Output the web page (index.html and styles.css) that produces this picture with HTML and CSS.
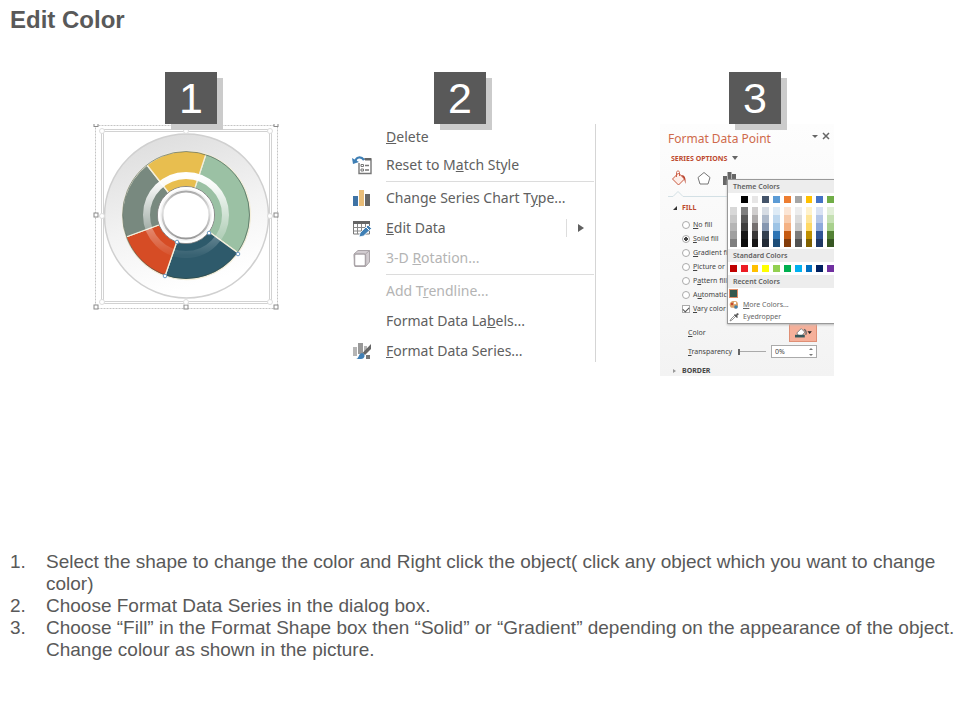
FILE: index.html
```html
<!DOCTYPE html>
<html lang="en">
<head>
    <meta charset="UTF-8">
    <meta name="viewport" content="width=device-width, initial-scale=1.0">
    <title>Edit Color</title>
    <link rel="stylesheet" href="styles.css">
</head>
<body>

    <h1>Edit Color</h1>

    <main class="steps">
        <section class="step step-chart">
            <div class="badge">1</div>
            <svg class="chart" viewBox="1 0 190 190" role="img" aria-label="Selected doughnut chart">
                <defs>
                    <linearGradient id="plate" x1="0" y1="0" x2="0.3" y2="1">
                        <stop offset="0" stop-color="#dadada"/>
                        <stop offset="0.6" stop-color="#f3f3f3"/>
                        <stop offset="1" stop-color="#ffffff"/>
                    </linearGradient>
                    <linearGradient id="shine" x1="0" y1="52" x2="0" y2="131" gradientUnits="userSpaceOnUse">
                        <stop offset="0" stop-color="#fff"/>
                        <stop offset="0.15" stop-color="#fff" stop-opacity="0.9"/>
                        <stop offset="0.7" stop-color="#fff" stop-opacity="0.3"/>
                        <stop offset="1" stop-color="#fff" stop-opacity="0.05"/>
                    </linearGradient>
                    <linearGradient id="hub" x1="0" y1="0" x2="0" y2="1">
                        <stop offset="0" stop-color="#aaa"/>
                        <stop offset="0.4" stop-color="#e2e2e2"/>
                        <stop offset="1" stop-color="#999"/>
                    </linearGradient>
                </defs>
                <rect x="3.5" y="1.5" width="182" height="183" fill="none" stroke="#c4c4c4" stroke-dasharray="2 1"/>
                <rect x="10.5" y="6.5" width="168" height="172" fill="none" stroke="#d2d2d2" stroke-width="3"/>
                <rect x="10.5" y="6.5" width="168" height="172" fill="none" stroke="#fff"/>
                <circle cx="94.500" cy="92" r="82" fill="url(#plate)" stroke="#d0d0d0" stroke-width="1.5"/>
                <!-- slices, clockwise from the top right -->
                <g stroke="#f4efdc" stroke-width="1.3">
                    <path d="M94 91 L114 30 A64 64 0 0 1 146 129 Z" fill="#9bc1a4"/>
                    <path d="M94 91 L146 129 A64 64 0 0 1 73 152 Z" fill="#2e5a6b"/>
                    <path d="M94 91 L73 152 A64 64 0 0 1 34 113 Z" fill="#d64c25"/>
                    <path d="M94 91 L34 113 A64 64 0 0 1 55 41 Z" fill="#78897f"/>
                    <path d="M94 91 L55 41 A64 64 0 0 1 114 30 Z" fill="#e8be4f"/>
                </g>
                <circle cx="94" cy="91" r="63.5" fill="none" stroke="#33483f" stroke-opacity="0.55"/>
                <circle cx="94" cy="91" r="39.5" fill="none" stroke="url(#shine)" stroke-width="7"/>
                <circle cx="94" cy="91" r="28.5" fill="#f4f4f4" stroke="#888"/>
                <circle cx="94" cy="91" r="27" fill="#f4f4f4" stroke="#fff" stroke-width="2"/>
                <circle cx="94" cy="91" r="23.5" fill="#fff" stroke="url(#hub)" stroke-width="2"/>
                <g fill="#fff" stroke="#8a8a8a">
                    <rect x="2" y="-1.5" width="4" height="4"/>
                    <rect x="92" y="-1.5" width="4" height="4"/>
                    <rect x="182" y="-1.5" width="4" height="4"/>
                    <rect x="2" y="89" width="4" height="4"/>
                    <rect x="182" y="89" width="4" height="4"/>
                    <rect x="2" y="181" width="4" height="4"/>
                    <rect x="92" y="181" width="4" height="4"/>
                    <rect x="182" y="181" width="4" height="4"/>
                </g>
                <g fill="#fff" stroke="#ddd">
                    <circle cx="10" cy="7" r="2.5"/>
                    <circle cx="94" cy="7" r="2.5"/>
                    <circle cx="178" cy="7" r="2.5"/>
                    <circle cx="10" cy="92" r="2.5"/>
                    <circle cx="178" cy="92" r="2.5"/>
                    <circle cx="10" cy="178" r="2.5"/>
                    <circle cx="94" cy="178" r="2.5"/>
                    <circle cx="178" cy="178" r="2.5"/>
                </g>
                <g fill="#fff" stroke="#6f9cc4">
                    <circle cx="117" cy="109" r="1.8"/>
                    <circle cx="146" cy="130" r="1.8"/>
                    <circle cx="85" cy="118" r="1.8"/>
                    <circle cx="73" cy="152" r="1.8"/>
                </g>
            </svg>
        </section>

        <section class="step step-menu">
            <div class="badge">2</div>
            <div class="menu">
                <button class="menu-item"><span class="icon"></span><span><u>D</u>elete</span></button>
                <button class="menu-item">
                    <svg class="icon" viewBox="0 0 20 20">
                        <path d="M7 8V18.500H19V4H12" fill="#fff" stroke="#777" stroke-width="1.400"/>
                        <path d="M13 3h6v2.500h-6z" fill="#666"/>
                        <path d="M9 9.500h2.500v2H9zM9 14h2.500v2H9z" fill="none" stroke="#777"/>
                        <path d="M13 10.500h4M13 15h4" stroke="#777" stroke-width="1.300"/>
                        <path d="M12 5C9 1 4 2 3.500 6" fill="none" stroke="#3f7fb5" stroke-width="2.200"/>
                        <path d="M0 3l1 6 6-2z" fill="#3f7fb5"/>
                    </svg>
                    <span>Reset to M<u>a</u>tch Style</span>
                </button>
                <hr>
                <button class="menu-item">
                    <svg class="icon" viewBox="0 0 20 20">
                        <path d="M1 8h5v10H1z" fill="#3f73a5"/>
                        <path d="M7 2h5v16H7z" fill="#e9bd78"/>
                        <path d="M13 6h5v12h-5z" fill="#666"/>
                    </svg>
                    <span>Change Series Chart T<u>y</u>pe...</span>
                </button>
                <button class="menu-item">
                    <svg class="icon" viewBox="0 0 20 20">
                        <path d="M1.500 4h16v12h-16z" fill="#fff" stroke="#777"/>
                        <path d="M1 3h17v3H1z" fill="#666"/>
                        <path d="M1.500 9.500h16M1.500 13h16M5.500 6v10M9.500 6v10M13.500 6v10" stroke="#888"/>
                        <path d="M7 19l1-4 8-8 3.500 3.500-8 7.500z" fill="#3f7fb5" stroke="#fff" stroke-width="0.800"/>
                        <path d="M14 9l3 3" stroke="#fff"/>
                    </svg>
                    <span><u>E</u>dit Data</span>
                    <span class="submenu"></span>
                </button>
                <button class="menu-item" disabled>
                    <svg class="icon" viewBox="0 0 20 20">
                        <path d="M2 6l4-3.500h11.500V14l-4 4.500H3z" fill="#d2ccd0" stroke="#aaa4a8"/>
                        <rect x="2.500" y="6" width="11" height="12" rx="1.500" fill="#fff" stroke="#aaa4a8" stroke-width="1.500"/>
                        <path d="M13.500 6l4-3.500" stroke="#aaa4a8"/>
                    </svg>
                    <span>3-D <u>R</u>otation...</span>
                </button>
                <hr>
                <button class="menu-item" disabled><span class="icon"></span><span>Add T<u>r</u>endline...</span></button>
                <button class="menu-item"><span class="icon"></span><span>Format Data La<u>b</u>els...</span></button>
                <button class="menu-item">
                    <svg class="icon" viewBox="0 0 20 20">
                        <path d="M1 6h4v9H1z" fill="#b5b5b5"/>
                        <path d="M6 2h5v11H6z" fill="#999"/>
                        <path d="M12 5h3v6h-3z" fill="#b5b5b5"/>
                        <path d="M19 3v5l-6 6-2.500-2z" fill="#666"/>
                        <path d="M4 18c3 0 2-5 6-6 4 1 3 6-1 6z" fill="#3f7fb5"/>
                        <path d="M14 14h4v4h-4z" fill="#777"/>
                    </svg>
                    <span><u>F</u>ormat Data Series...</span>
                </button>
            </div>
        </section>

        <section class="step step-pane">
            <div class="badge">3</div>
            <div class="pane">
                <div class="pane-head">
                    <h2>Format Data Point</h2>
                    <svg class="pane-tools" viewBox="0 0 20 10">
                        <path d="M1 4h6L4 7z" fill="#666"/>
                        <path d="M12 2l6 6M18 2l-6 6" stroke="#666" stroke-width="1.500"/>
                    </svg>
                </div>
                <button class="series">SERIES OPTIONS <span class="arrow"></span></button>
                <svg class="tabs" viewBox="0 0 174 30">
                    <path d="M12.500 11l6-6 6 6-6 6z" fill="#fdeee9" stroke="#c9583e"/>
                    <path d="M16.500 9V4.500c0-2 3-2 3 0V8" fill="none" stroke="#c9583e" stroke-width="0.900"/>
                    <path d="M21 7c4 0 5 3 4.500 9-1-3-1-5-2-6z" fill="#b9432e"/>
                    <path d="M44 4.500l6 5-2 6.500h-8l-2-6.500z" fill="#fff" stroke="#777"/>
                    <path d="M63 8h4v9h-4zM67.500 4h4v13h-4zM72 6h4v11h-4z" fill="#666"/>
                    <path d="M8 28.500h5l5-5 5 5h150" fill="none" stroke="#d3e0e5"/>
                </svg>
                <h3 class="group open">FILL</h3>
                <div class="options">
                    <label><input type="radio" name="fill"><span><u>N</u>o fill</span></label>
                    <label><input type="radio" name="fill" checked><span><u>S</u>olid fill</span></label>
                    <label><input type="radio" name="fill"><span><u>G</u>radient fill</span></label>
                    <label><input type="radio" name="fill"><span><u>P</u>icture or</span></label>
                    <label><input type="radio" name="fill"><span>P<u>a</u>ttern fill</span></label>
                    <label><input type="radio" name="fill"><span>A<u>u</u>tomatic</span></label>
                    <label><input type="checkbox" checked><span><u>V</u>ary color</span></label>
                </div>
                <div class="field">
                    <span><u>C</u>olor</span>
                    <button class="color-button" aria-label="Color">
                        <svg viewBox="0 0 28 18">
                            <path d="M7 9l5-5 4 4-3 4H9z" fill="#fff" stroke="#777"/>
                            <path d="M15 5c3 1 3 4 2 6" fill="none" stroke="#666" stroke-width="1.500"/>
                            <path d="M5 11h11v3H5z" fill="#35585c"/>
                            <path d="M19 7h5l-2.500 3z" fill="#222"/>
                        </svg>
                    </button>
                </div>
                <div class="field">
                    <label for="transparency"><u>T</u>ransparency</label>
                    <input type="range" value="0" aria-label="Transparency slider">
                    <span class="spin">
                        <input type="text" id="transparency" value="0%">
                        <svg viewBox="0 0 6 12"><path d="M1 4l2-2 2 2zM1 8l2 2 2-2z" fill="#777"/></svg>
                    </span>
                </div>
                <h3 class="group closed">BORDER</h3>

                <!-- open colour menu, covers the right of the pane -->
                <div class="palette">
                    <h4>Theme Colors</h4>
                    <div class="swatches theme" id="theme"></div>
                    <div class="swatches shades" id="shades"></div>
                    <h4>Standard Colors</h4>
                    <div class="swatches" id="standard"></div>
                    <h4>Recent Colors</h4>
                    <div class="recent"></div>
                    <button class="palette-item">
                        <svg viewBox="0 0 10 10">
                            <path d="M5 1C2 1 0 3 1 6s3 1 4 2 4 1 4-3-2-4-4-4z" fill="#d9a26a"/>
                            <circle cx="3" cy="4" r="1.200" fill="#c8452d"/>
                            <circle cx="6" cy="3" r="1.200" fill="#fff"/>
                            <circle cx="7" cy="7" r="1.800" fill="#407fa8"/>
                        </svg>
                        <span><u>M</u>ore Colors...</span>
                    </button>
                    <button class="palette-item">
                        <svg viewBox="0 0 10 10">
                            <path d="M1 9l1-2 4-4 1 1-4 4z" fill="#fff" stroke="#777" stroke-width="0.800"/>
                            <path d="M5 3l1-1 1 1 1-2 2 1-2 2 1 1-1 1z" fill="#555"/>
                        </svg>
                        <span>Eyedropper</span>
                    </button>
                </div>
            </div>
        </section>
    </main>

    <ol class="notes">
        <li>Select the shape to change the color and Right click the object( click any object which you want to change color)</li>
        <li>Choose Format Data Series in the dialog box.</li>
        <li>Choose “Fill” in the Format Shape box then “Solid” or “Gradient” depending on the appearance of the object. Change colour as shown in the picture.</li>
    </ol>

    <script src="script.js"></script>
</body>
</html>
```
FILE: styles.css
```css
* {
    box-sizing: border-box;
}

body {
    font-family: "Liberation Sans", Arial, sans-serif;
    margin: 0;
    color: #595959;
    background-color: #fff;
}

h1 {
    margin: 0;
    padding: 6px 10px 0;
    font-size: 24px;
    line-height: 28px;
}

button {
    font-family: inherit;
    color: inherit;
    background: none;
    border: none;
    padding: 0;
    text-align: left;
}

u {
    text-underline-offset: 1px;
}

.steps {
    display: flex;
    gap: 35px;
    padding: 38px 81px 0 93px;
    min-height: 517px;
    align-items: flex-start;
}

.step {
    display: flex;
    flex-direction: column;
}

.step-chart {
    flex: 196 1 0;
}

.step-menu {
    flex: 272 1 0;
}

.step-pane {
    flex: 248 1 0;
}

.badge {
    position: relative;
    z-index: 1;
    align-self: center;
    width: 52px;
    height: 52px;
    background-color: #595959;
    box-shadow: 6px 6px 0 #cbcbcb;
    color: #fff;
    font-size: 43px;
    line-height: 53px;
    text-align: center;
}

.chart {
    width: 190px;
    height: 190px;
}

/* context menu */
.menu {
    margin-left: 28px;
    padding-right: 1px;
    border-right: 1px solid #d5d5d5;
    font-family: "Noto Sans", sans-serif;
    height: 238px;
}

.menu-item {
    display: flex;
    align-items: center;
    width: 100%;
    height: 30px;
    font-size: 14px;
    line-height: 20px;
    color: #606060;
    white-space: nowrap;
}

.menu-item:first-child {
    height: 26px;
}

.menu-item:disabled {
    color: #b4b4b4;
}

.menu .icon {
    flex: none;
    width: 20px;
    height: 20px;
    margin-right: 14px;
}

.menu hr {
    height: 1px;
    margin: 1px 0 1px 34px;
    border: none;
    background-color: #dcdcdc;
}

.submenu {
    margin-left: auto;
    margin-right: 10px;
    padding-left: 11px;
    border-left: 1px solid #ddd;
    height: 18px;
    display: flex;
    align-items: center;
}

.submenu::after {
    content: "";
    border: 4px solid transparent;
    border-left: 6px solid #606060;
    border-right: none;
}

/* format pane */
.pane {
    position: relative;
    align-self: flex-start;
    width: 174px;
    height: 252px;
    margin-left: 29px;
    padding-top: 6px;
    overflow: hidden;
    background: linear-gradient(#fdfdfd, #f3f3f3);
    font-family: "Noto Sans", sans-serif;
    font-size: 7px;
    line-height: 10px;
    color: #444;
}

.pane-head {
    display: flex;
    justify-content: space-between;
    padding: 0 3px 0 8px;
}

.pane h2 {
    margin: 0;
    font-size: 12px;
    font-weight: normal;
    line-height: 18px;
    color: #cf6a4b;
}

.pane-tools {
    width: 20px;
    height: 10px;
    margin-top: 1px;
}

.series {
    display: flex;
    align-items: center;
    gap: 5px;
    height: 20px;
    padding-left: 11px;
    font-size: 7px;
    font-weight: bold;
    color: #bd4b30;
}

.arrow {
    border: 3px solid transparent;
    border-top: 4px solid #666;
    border-bottom: none;
}

.tabs {
    display: block;
    width: 174px;
    height: 30px;
}

.group {
    margin: 0;
    padding-left: 22px;
    font-size: 7px;
    line-height: 20px;
    position: relative;
}

.group.open {
    color: #bd4b30;
}

.group::before {
    content: "";
    position: absolute;
    left: 13px;
    top: 8px;
    border: 2px solid transparent;
}

.group.open::before {
    border-right-color: #333;
    border-bottom-color: #333;
}

.group.closed::before {
    border-left: 3px solid #999;
}

.options {
    width: 67px;
    margin-bottom: 7px;
    overflow: hidden;
}

.options label {
    display: flex;
    align-items: center;
    gap: 3px;
    height: 14px;
    padding-left: 22px;
    white-space: nowrap;
}

.options input {
    appearance: none;
    flex: none;
    width: 8px;
    height: 8px;
    margin: 0;
    border: 1px solid #aaa;
    background-color: #fff;
    border-radius: 50%;
}

.options input[type="radio"]:checked {
    background: radial-gradient(#444 0 2px, #fff 2px);
}

.options input[type="checkbox"] {
    display: grid;
    place-items: center;
    border-radius: 0;
}

.options input[type="checkbox"]::before {
    content: "";
    width: 5px;
    height: 3px;
    border-left: 1px solid #555;
    border-bottom: 1px solid #555;
    transform: rotate(-45deg);
}

.field {
    display: flex;
    align-items: center;
    height: 19px;
    padding: 0 17px 0 28px;
}

.color-button {
    width: 28px;
    height: 18px;
    margin-left: auto;
    background-color: #f5b09a;
    border: 1px solid #df8f75;
}

.color-button svg {
    display: block;
    width: 100%;
    height: 100%;
}

.field input[type="range"] {
    appearance: none;
    width: 28px;
    height: 8px;
    margin: 0 4px 0 6px;
    background: linear-gradient(#aaa, #aaa) center / 100% 1px no-repeat;
}

.field input[type="range"]::-webkit-slider-thumb {
    appearance: none;
    width: 2px;
    height: 6px;
    background-color: #666;
}

.spin {
    display: flex;
    align-items: center;
    width: 46px;
    height: 13px;
    margin-left: auto;
    border: 1px solid #aaa;
    background-color: #fff;
}

.spin input {
    width: 36px;
    padding: 0 3px;
    border: none;
    background: none;
    font: inherit;
    color: inherit;
}

.spin svg {
    width: 6px;
    height: 12px;
}

/* colour menu */
.palette {
    position: absolute;
    left: 67px;
    top: 55px;
    width: 110px;
    height: 145px;
    background-color: #fff;
    border: 1px solid #999;
    box-shadow: 0 1px 2px #bbb;
}

.palette h4 {
    margin: 0;
    padding-left: 5px;
    font-size: 7px;
    line-height: 13px;
    font-weight: 600;
    color: #606060;
    background-color: #ededed;
}

.swatches {
    display: flex;
    gap: 4px;
    padding: 3px 2px;
}

.swatch {
    width: 7px;
    height: 7px;
}

.swatches.shades {
    padding: 1px 2px 2px;
}

.shades .swatch {
    height: 40px;
}

.recent {
    width: 9px;
    height: 9px;
    margin: 1px;
    background-color: #35584e;
    border: 1px solid #e08c68;
}

.palette-item {
    display: flex;
    align-items: center;
    gap: 4px;
    height: 12px;
    padding-left: 1px;
    font-size: 7px;
    line-height: 12px;
    color: #666;
}

.palette-item svg {
    width: 10px;
    height: 10px;
}

/* instructions */
.notes {
    margin: 0;
    padding: 0 4px 0 10px;
    list-style: none;
    counter-reset: note;
    font-size: 19px;
    line-height: 22px;
}

.notes li {
    display: grid;
    grid-template-columns: 36px 1fr;
    counter-increment: note;
}

.notes li::before {
    content: counter(note) ".";
}
```
FILE: script.js
```js
const theme = ['#ffffff', '#000000', '#e7e6e6', '#44546a', '#5b9bd5', '#ed7d31', '#a5a5a5', '#ffc000', '#4472c4', '#70ad47'];
const standard = ['#c00000', '#ed1c24', '#ffc000', '#ffff00', '#92d050', '#00b050', '#00b0f0', '#0070c0', '#002060', '#7030a0'];

// five steps for each theme colour, light to dark
const shades = [
    ['#d8d8d8', '#c8c8c8', '#b5b5b5', '#a0a0a0', '#7f7f7f'],
    ['#7f7f7f', '#595959', '#3f3f3f', '#161616', '#0c0c0c'],
    ['#d0cece', '#aeabab', '#757070', '#3a3838', '#171616'],
    ['#d6dce4', '#adb9ca', '#8496b0', '#323f4f', '#222a35'],
    ['#deebf6', '#bdd7ee', '#9cc3e5', '#2e75b5', '#1e4e79'],
    ['#fbe5d5', '#f7cbac', '#f4b183', '#c55a11', '#833c0b'],
    ['#ededed', '#dbdbdb', '#c9c9c9', '#7b7b7b', '#525252'],
    ['#fff2cc', '#fee599', '#ffd965', '#bf9000', '#7f6000'],
    ['#d9e2f3', '#b4c6e7', '#8eaadb', '#2f5496', '#1f3864'],
    ['#e2efd9', '#c5e0b3', '#a8d08d', '#538135', '#375623']
];

function addSwatch(id, background) {
    const swatch = document.createElement('span');
    swatch.className = 'swatch';
    swatch.style.background = background;
    document.getElementById(id).appendChild(swatch);
}

theme.forEach(color => addSwatch('theme', color));
standard.forEach(color => addSwatch('standard', color));
shades.forEach(list => {
    const stops = list.map((color, i) => `${color} ${i * 20}% ${(i + 1) * 20}%`);
    addSwatch('shades', `linear-gradient(${stops.join(', ')})`);
});
```
